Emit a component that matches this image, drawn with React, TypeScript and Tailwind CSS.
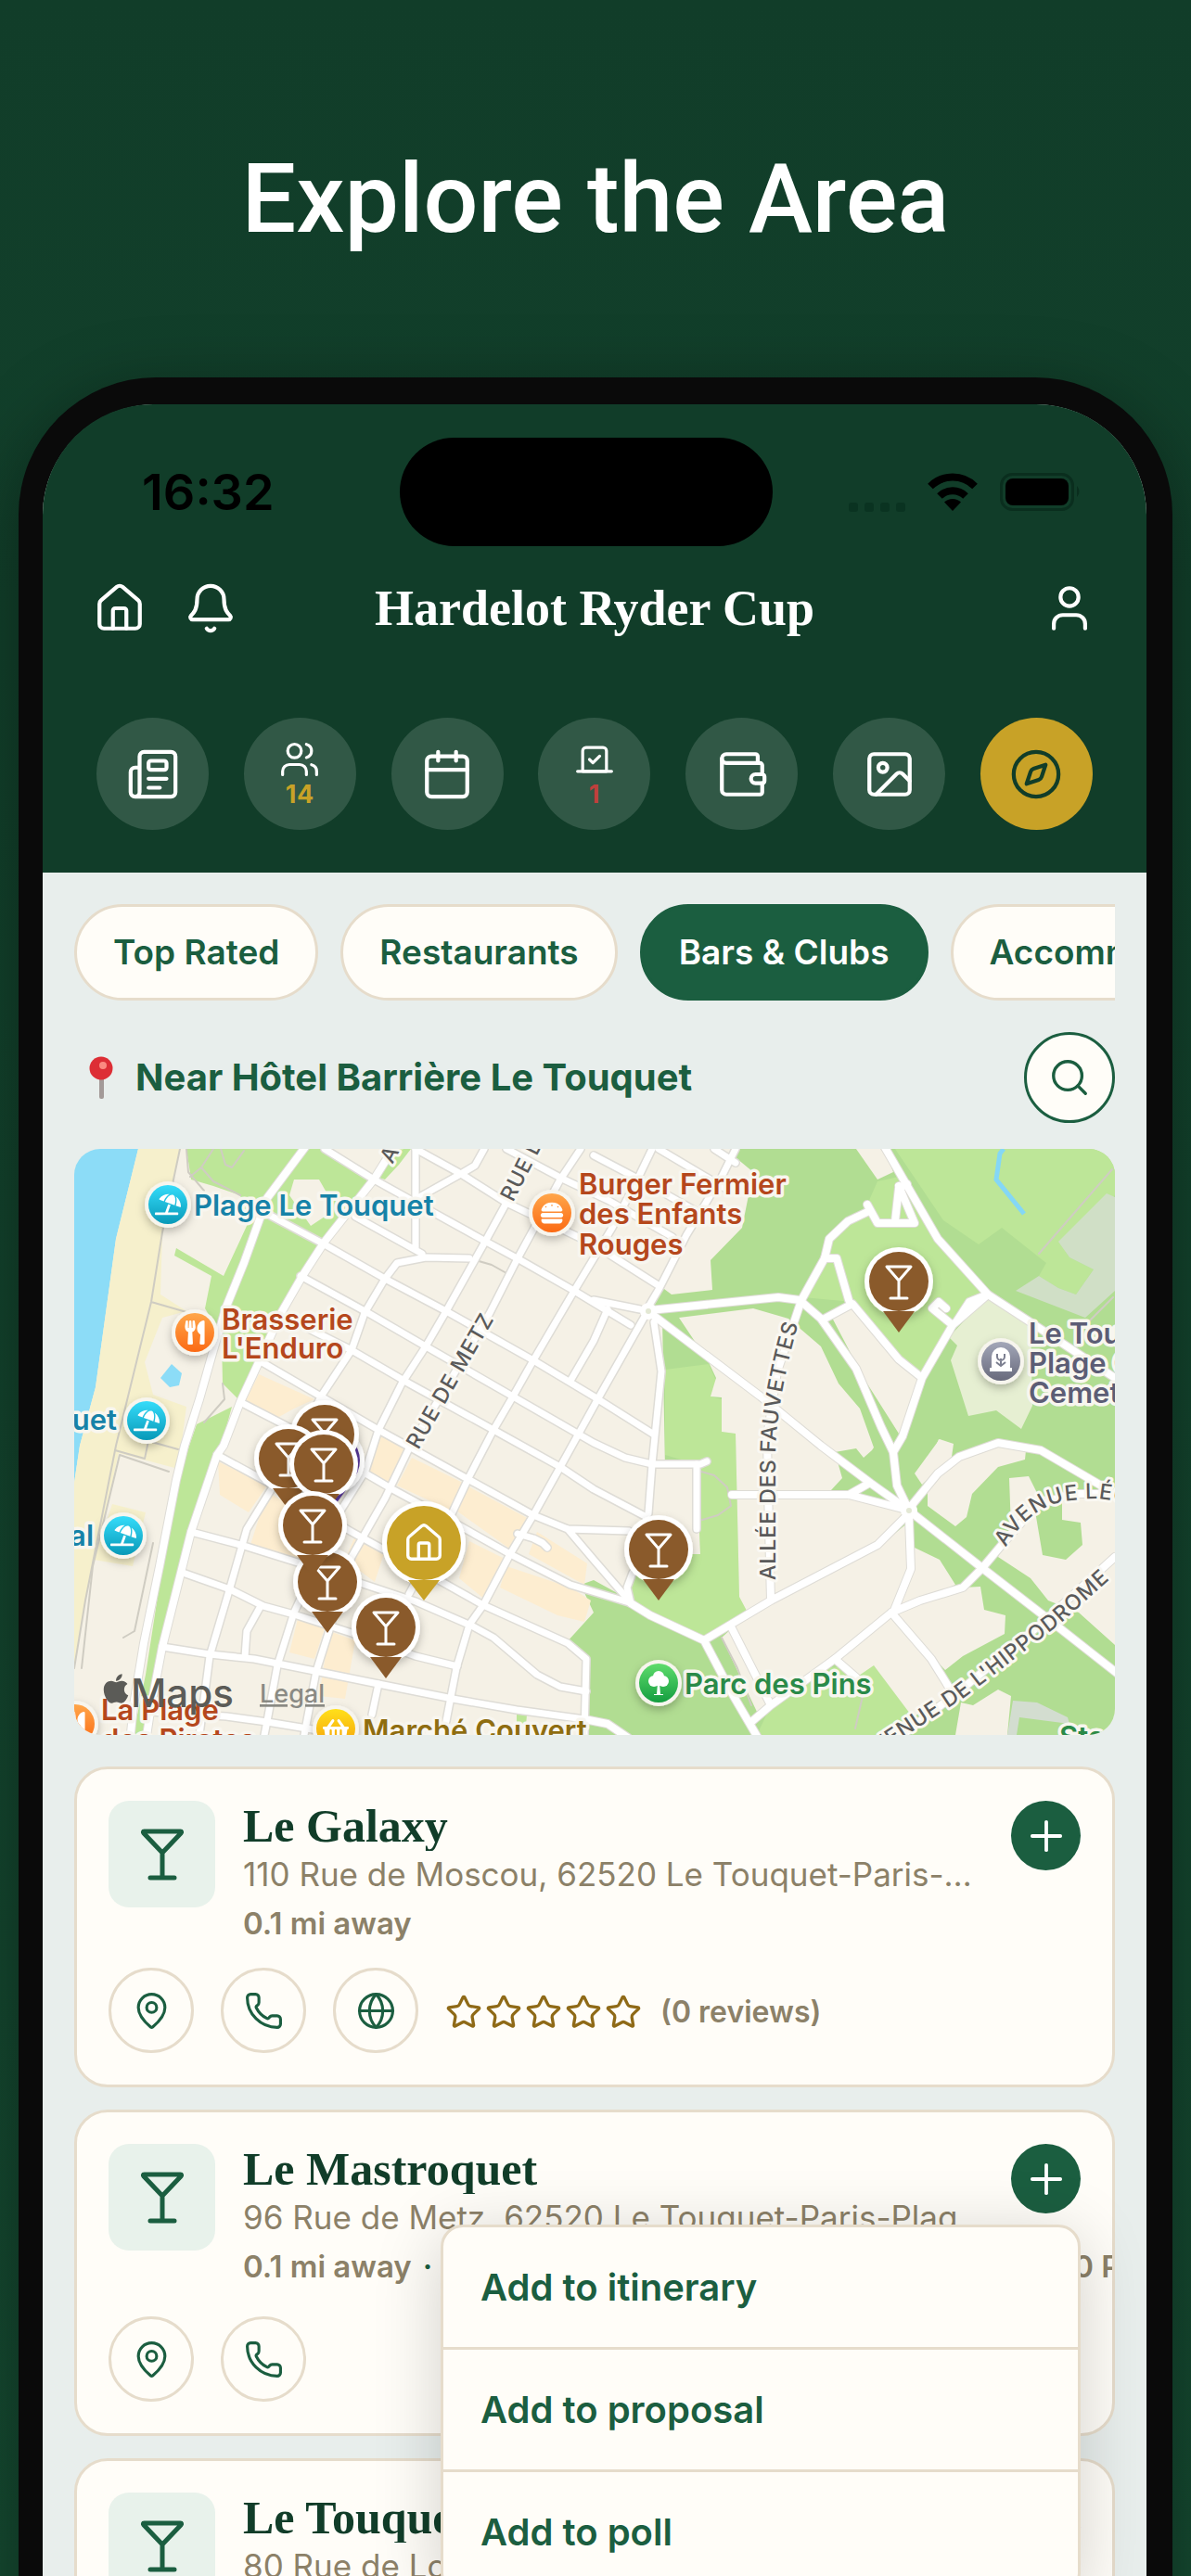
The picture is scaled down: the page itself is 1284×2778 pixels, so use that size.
import type { ReactNode } from 'react';
import {
  Bell,
  Calendar,
  Compass,
  Globe,
  House,
  Image as ImageIcon,
  MapPin,
  Newspaper,
  Phone,
  Plus,
  Search,
  Star,
  User,
  Users,
  Vote,
  Wallet
} from 'lucide-react';
import { FaApple, FaShoppingBasket, FaUmbrellaBeach, FaUtensils } from 'react-icons/fa';
import { FaBurger } from 'react-icons/fa6';

interface Venue {
  name: string;
  address: string;
  distance: string;
  hours?: string;
  website?: boolean;
  reviews?: number;
  menuOpen?: boolean;
}

const venues: Venue[] = [
  {
    name: 'Le Galaxy',
    address: '110 Rue de Moscou, 62520 Le Touquet-Paris-Plage, France',
    distance: '0.1 mi away',
    website: true,
    reviews: 0
  },
  {
    name: 'Le Mastroquet',
    address: '96 Rue de Metz, 62520 Le Touquet-Paris-Plage, France',
    distance: '0.1 mi away',
    hours: '10:00 PM',
    menuOpen: true
  },
  {
    name: 'Le Touquet Bar',
    address: '80 Rue de Londres, 62520 Le Touquet-Paris-Plage, France',
    distance: '0.1 mi away'
  }
];

const filters = ['Top Rated', 'Restaurants', 'Bars & Clubs', 'Accommodation'];
const menuItems = ['Add to itinerary', 'Add to proposal', 'Add to poll'];

function Martini({ className, strokeWidth = 5 }: { className?: string; strokeWidth?: number }) {
  return (
    <svg
      viewBox="0 0 48 56"
      className={className}
      fill="none"
      stroke="currentColor"
      strokeWidth={strokeWidth}
      strokeLinecap="round"
      strokeLinejoin="round"
    >
      <path d="M4.500 3h39q2 0 .5 2L24 26 4 5q-1.500-2 .5-2ZM24 26v27M11 53h26" />
    </svg>
  );
}

function StatusBar() {
  return (
    <div className="grid grid-cols-[385fr_402px_403fr] items-center pt-9">
      <div className="pl-[107px] text-[54px] leading-none font-semibold text-black">16:32</div>
      <div className="h-[117px] rounded-full bg-black" />
      <div className="flex items-center justify-end gap-6 pr-[70px]">
        <div className="flex gap-[7px] self-end">
          <span className="size-[10px] rounded-[3px] bg-[#0a3321]" />
          <span className="size-[10px] rounded-[3px] bg-[#0a3321]" />
          <span className="size-[10px] rounded-[3px] bg-[#0a3321]" />
          <span className="size-[10px] rounded-[3px] bg-[#0a3321]" />
        </div>
        <svg viewBox="0 0 54 41" className="h-[41px] w-[54px]" fill="none" stroke="#000" strokeWidth="8">
          <path d="M3 14.500a34 34 0 0 1 48 0" />
          <path d="M13 25a20 20 0 0 1 28 0" />
          <path d="M27 41l-9-9.500a13 13 0 0 1 18 0Z" fill="#000" stroke="none" />
        </svg>
        <svg viewBox="0 0 88 42" className="h-[42px] w-[88px]">
          <rect x="1.500" y="1.500" width="77" height="38" rx="12" fill="none" stroke="#0a2e1e" strokeWidth="3" />
          <rect x="6" y="6" width="68" height="29" rx="8" fill="#000" />
          <path d="M83 14q5 6 0 12Z" fill="#0a2e1e" />
        </svg>
      </div>
    </div>
  );
}

function NavItem({
  label,
  active,
  count,
  countClass,
  children
}: {
  label: string;
  active?: boolean;
  count?: number;
  countClass?: string;
  children: ReactNode;
}) {
  return (
    <button
      aria-label={label}
      className={
        'flex size-[121px] flex-col items-center justify-center rounded-full ' +
        (active ? 'bg-[#c8a227] text-[#113d29]' : 'bg-[#315846] text-white')
      }
    >
      {children}
      {count !== undefined && <span className={'text-[27px] leading-8 font-bold tracking-wide ' + countClass}>{count}</span>}
    </button>
  );
}

function Header() {
  return (
    <header className="bg-[#113d29] pb-[46px]">
      <StatusBar />
      <div className="grid h-[134px] grid-cols-[1fr_auto_1fr] items-center px-[54px] text-white">
        <div className="flex gap-10">
          <button aria-label="Home">
            <House size={58} strokeWidth={1.75} />
          </button>
          <button aria-label="Notifications">
            <Bell size={58} strokeWidth={1.75} />
          </button>
        </div>
        <h2 className="font-['Liberation_Serif',serif] text-[54px] leading-none font-bold">Hardelot Ryder Cup</h2>
        <button aria-label="Profile" className="justify-self-end">
          <User size={58} strokeWidth={1.75} />
        </button>
      </div>
      <nav className="mt-[51px] flex justify-between px-[58px]">
        <NavItem label="News">
          <Newspaper size={58} strokeWidth={1.75} />
        </NavItem>
        <NavItem label="Players" count={14} countClass="text-[#c8a227]">
          <Users size={44} strokeWidth={1.75} />
        </NavItem>
        <NavItem label="Calendar">
          <Calendar size={58} strokeWidth={1.75} />
        </NavItem>
        <NavItem label="Votes" count={1} countClass="text-[#c0403c]">
          <Vote size={44} strokeWidth={1.75} />
        </NavItem>
        <NavItem label="Wallet">
          <Wallet size={58} strokeWidth={1.75} />
        </NavItem>
        <NavItem label="Photos">
          <ImageIcon size={58} strokeWidth={1.75} />
        </NavItem>
        <NavItem label="Explore" active>
          <Compass size={58} strokeWidth={1.75} />
        </NavItem>
      </nav>
    </header>
  );
}

// Map geometry, in map units (1122 x 632)
const lightGreen = [
  '121,0 270,0 323,33 270,100 244,137 223,177 208,203 194,230 177,270 160,253 159,203 141,172 148,137 108,115 110,107 161,137 186,83 179,50 150,40 126,33',
  '335,33 350,17 363,0 350,0 325,30',
  '170,278 132,297 124,320 110,367 95,450 77,567 66,620 62,632 77,632 84,583 95,540 115,457 126,410 154,330 164,300',
  '866,35 855,60 809,110 786,160 839,165 889,227 914,247 947,190 985,157 931,97 889,30',
  '885,0 1122,0 1122,50 1070,110 1053,127 1000,85 975,103 937,77',
  '637,238 684,232 692,250 686,267 698,270 698,305 713,307 717,483 726,500 679,530 600,487 602,460 640,437 675,437 671,340 637,330',
  '751,600 805,560 862,557 904,613 893,632 736,632',
  '1061,100 1073,117 1099,130 1080,157 1061,150 1040,137',
  '477,610 488,610 487,622 477,622'
];

const darkGreen =
  '714,0 714,10 732,25 720,85 686,120 688,152 644,157 632,148 620,175 630,200 633,240 625,330 620,400 600,430 600,487 560,465 546,470 560,500 530,533 553,550 550,632 1122,632 1122,0';

const land = [
  '237,33 264,33 272,47 270,73 255,83 232,50',
  '623,180 634,182 637,345 671,345 675,437 640,437 602,460 600,430',
  '652,182 732,172 770,183 805,213 824,253 847,280 862,322 860,325 851,333 843,323 820,327 828,355 816,368 836,373 893,393 866,427 751,487 726,500 717,483 713,307 698,305 698,268 686,267 692,247 684,230',
  '816,180 837,168 889,227 914,247 889,307 851,247',
  '843,0 874,0 883,25 866,33',
  '751,490 866,430 899,403 901,453 881,500 805,560 751,600 709,517',
  '698,527 709,517 748,603 736,607',
  '906,430 933,443 950,470 912,487 883,500 902,453',
  '881,500 958,473 977,472 981,497 1004,503 1003,523 958,547 939,562',
  '820,550 881,500 947,587 904,613 862,557 843,570',
  '906,350 933,313 948,318 946,332 914,362',
  '920,367 946,340 996,318 1026,325 1025,335 996,343 968,372 962,397 950,407 920,385',
  '1008,355 1029,353 1040,375 1122,370 1122,535 1083,500 1050,487 1031,463 996,440 1010,410',
  '996,583 1010,590 1006,632 950,632 956,597 969,600',
  '932,313 940,318 925,330'
];

const blocks = [
  '199,243 259,270 237,280 219,290 184,273',
  '155,337 208,363 188,392 157,373',
  '208,370 235,385 245,445 190,427',
  '326,307 357,323 339,363 314,347',
  '364,333 419,360 406,390 348,363',
  '423,363 492,400 472,433 412,390',
  '426,423 466,443 444,487 415,463',
  '466,450 535,473 557,487 550,510 521,503 459,473',
  '303,417 335,433 324,467 292,443',
  '241,507 270,517 259,550 232,543',
  '275,520 303,530 292,593 264,590',
  '499,413 553,447 550,470 490,437'
];

const streets = [
  'M270 0L323 33 444 100 481 120 539 153 600 190',
  'M368 0L417 27 466 58 560 103 631 148',
  'M466 0L528 33 575 55 645 95',
  'M560 7L617 37 672 68M690 0L713 15M630 0L706 45',
  'M208 70L268 102 335 140 401 175 495 228 560 267 625 308',
  'M244 137L317 177 379 213 473 267 560 317 594 333 623 340 675 340 682 337',
  'M245 190L299 217 361 253 452 303 524 343 560 367 617 397',
  'M199 228L266 267 328 303 426 357 495 395 532 410 598 412M532 410L560 443 598 487',
  'M179 273L237 303 314 350 343 367 404 400 470 437 535 470 598 489',
  'M154 330L215 363 299 413 361 447 441 492 532 533 552 550 550 632',
  'M126 413L183 428 244 447 314 470 368 488 430 515 452 527 499 567 524 580 552 585',
  'M117 457L168 475 204 493 237 502 299 522 368 547 413 558',
  'M95 537L146 545 194 550 259 563 328 577 408 593 477 605 550 615',
  'M81 607L164 612 208 618 263 627',
  'M442 0L432 18 415 28 372 52',
  'M368 0V107M303 73L375 113',
  'M335 140L348 123 379 117 426 118',
  'M546 0L524 33 495 87 477 120 448 177 401 257 361 323 335 377 299 440 285 480 277 513 261 563 248 632',
  'M466 58L443 100 401 175 379 213 353 253 328 303 314 347 281 400 260 450 237 500 219 557 208 617 205 632',
  'M335 140L313 177 299 217 266 267 240 320 215 363 186 410 168 473 146 547 135 632',
  'M623 0L610 27 580 85 539 153 495 228 473 267 452 303 426 353 404 400 361 480',
  'M713 0L698 30 660 93 631 150 618 172',
  'M617 177L566 267 524 343 495 395 470 437 441 492 426 513 412 560 401 617',
  'M575 173L560 207 535 250M560 163L610 173M201 493L186 520 184 548M328 577L321 610',
  'M625 187L633 240 625 320 623 340 619 393M671 340V410M478 415L495 420 505 425 510 430',
  'M602 457L596 473 600 490'
];

const avenues = [
  'M255 -10L208 53 183 123 164 170 150 217 135 270 119 320 110 357 92 450 75 533 64 600 60 640',
  'M350 -10L323 33 270 100 246 137 223 177 199 230 179 273 161 320 154 330 126 413 115 457 95 537 83 600 77 640',
  'M600 490L621 503 679 530 709 587 740 640',
  'M679 530L751 487 866 427 900 393M751 487L748 367 747 310 758 240 776 187 784 163',
  'M709 517L751 600M730 618L751 600 820 550 881 500 912 487 958 473 979 452 1000 427 1037 385 1075 372 1122 372',
  'M881 500L924 550 947 587M820 550L843 570',
  'M900 390L979 452 1050 507 1130 570M900 397L902 453 883 500',
  'M621 177L740 267 805 320 858 360 900 390M709 373H835L893 388M835 373L858 360',
  'M900 390L887 363 883 327 870 300 843 237 805 183 782 163 759 160 621 174',
  'M883 327L893 310 914 247 947 190 985 157M914 247L889 227 839 167 809 183M835 163L822 118 809 118',
  'M784 163L809 118 814 97 834 78 855 68M855 60L866 80H906L889 40M885 78L889 42 898 38',
  'M872 -5L931 97 985 157 1031 187 1122 247M985 157L965 165 952 185M947 190L925 172 932 165 940 172',
  'M904 383L931 350 954 332 996 317 1042 325 1107 363',
  'M893 632L960 580 1045 510 1122 440M550 615L575 620 597 635'
];

const paths = [
  'M114 0L95 90 83 165 45 320 12 487 0 560M83 165L121 176M121 0L123 25 140 45M150 0L137 20 125 30M137 20L150 35 179 50M158 0L163 17 170 20 183 2',
  'M160 253L162 270 140 295M49 330L102 348M49 330L20 450 8 560M85 425L65 520 53 527M44 325L76 334 80 315 112 324',
  'M426 118L450 125 466 134M676 348L690 352 704 365 708 385 694 395 677 400M1119 22L1040 113M843 570L850 590 842 625',
  'M698 527L715 560 730 600M1120 160L1090 190'
];

const pins = [
  [270, 308],
  [231, 334],
  [269, 340],
  [273, 467],
  [257, 406],
  [336, 516],
  [630, 432],
  [889, 143]
];

function BarPin({ x, y, color = '#8a5a2b' }: { x: number; y: number; color?: string }) {
  return (
    <g transform={`translate(${x} ${y})`}>
      <circle r="37" fill="#fff" filter="url(#pin-shadow)" />
      <circle r="32" fill={color} />
      <path d="M-17 32H17L0 55Z" fill={color} />
      <path
        d="M-13-16H13L0-1ZM0-1V17M-9 18H9"
        fill="none"
        stroke="#fff"
        strokeWidth="3"
        strokeLinecap="round"
        strokeLinejoin="round"
      />
    </g>
  );
}

function Poi({ x, y, fill, children }: { x: number; y: number; fill: string; children: ReactNode }) {
  return (
    <g transform={`translate(${x} ${y})`} color="#fff">
      <circle r="25" fill="#f7f5ee" filter="url(#pin-shadow)" />
      <circle r="21" fill={fill} />
      {children}
    </g>
  );
}

function MapView() {
  return (
    <svg
      viewBox="0 0 1122 632"
      preserveAspectRatio="xMidYMid slice"
      className="mt-7 block w-full rounded-[28px] bg-[#f5f1e6]"
      role="img"
      aria-label="Map of bars near Hôtel Barrière Le Touquet"
    >
      <defs>
        <filter id="pin-shadow" x="-30%" y="-30%" width="160%" height="170%">
          <feDropShadow dx="0" dy="4" stdDeviation="5" floodOpacity="0.25" />
        </filter>
        <linearGradient id="poi-beach" x2="0" y2="1">
          <stop stopColor="#35dcfa" />
          <stop offset="1" stopColor="#0899b8" />
        </linearGradient>
        <linearGradient id="poi-food" x2="0" y2="1">
          <stop stopColor="#ffa64a" />
          <stop offset="1" stopColor="#fb6a14" />
        </linearGradient>
        <linearGradient id="poi-park" x2="0" y2="1">
          <stop stopColor="#5fdc6c" />
          <stop offset="1" stopColor="#149d40" />
        </linearGradient>
        <linearGradient id="poi-shop" x2="0" y2="1">
          <stop stopColor="#ffe01a" />
          <stop offset="1" stopColor="#f59e0b" />
        </linearGradient>
        <linearGradient id="poi-grave" x2="0" y2="1">
          <stop stopColor="#a3a7b8" />
          <stop offset="1" stopColor="#686a7c" />
        </linearGradient>
        <path id="allee" d="M756 465L756 330Q757 270 783 180" />
        <path id="leo" d="M1004 430C1022 400 1045 382 1075 379S1105 374 1170 392" />
        <path id="hippo" d="M866 653L962 590 1062 513 1160 425" />
      </defs>

      {/* Land cover */}
      <polygon points="0,0 69,0 45,97 23,257 6,320 0,360" fill="#8cdcf7" />
      <polygon
        points="69,0 114,0 95,90 93,157 121,175 95,182 76,230 85,265 121,278 112,345 48,328 12,487 0,560 0,360 6,320 23,257 45,97"
        fill="#f6f0cc"
      />
      <polygon points="41,383 77,392 63,450 21,443" fill="#f6f0cc" />
      <polygon points="105,232 116,242 113,255 103,257 93,247" fill="#8cdcf7" />
      <polygon points={darkGreen} fill="#b1dd92" />
      {lightGreen.map((points) => (
        <polygon key={points} points={points} fill="#bde698" />
      ))}
      {land.map((points) => (
        <polygon key={points} points={points} fill="#f5f1e6" />
      ))}
      <polygon points="1035,385 1065,380 1065,400 1085,403 1087,427 1069,443 1044,438" fill="#b1dd92" />
      <polygon
        points="1015,153 1040,137 1061,150 1080,157 1099,130 1073,117 1061,100 1113,48 1122,52 1122,153 1090,182"
        fill="#d0dfc6"
      />
      <polygon points="985,158 1031,187 1033,277 1021,302 994,282 964,288 945,228 952,212 943,203" fill="#e6efd2" />
      <polygon points="1012,595 1038,597 1071,613 1073,620 1019,613 1016,632 1006,632" fill="#d3ddd0" />
      <polyline points="1002,0 998,5 994,33 1024,70" fill="none" stroke="#84d7f6" strokeWidth="5" />
      {blocks.map((points) => (
        <polygon key={points} points={points} fill="#fdedd0" />
      ))}

      {/* Roads */}
      <g fill="none" strokeLinejoin="round" strokeLinecap="round">
        {paths.map((d) => (
          <path key={d} d={d} stroke="#cfccc2" strokeWidth="2" />
        ))}
        {[...streets, ...avenues].map((d) => (
          <path key={d} d={d} stroke="#dedcd6" strokeWidth="10" />
        ))}
        {streets.map((d) => (
          <path key={d} d={d} stroke="#fff" strokeWidth="7" />
        ))}
        {avenues.map((d) => (
          <path key={d} d={d} stroke="#fff" strokeWidth="8" />
        ))}
        <circle cx="619" cy="175" r="6" fill="#e3e8d4" stroke="#fff" strokeWidth="6" />
        <circle cx="900" cy="390" r="6" fill="#e3e8d4" stroke="#fff" strokeWidth="6" />
      </g>

      {/* Street names */}
      <g
        fontSize="23"
        fontWeight="500"
        letterSpacing="1"
        fill="#5a5a5a"
        stroke="#faf8f2"
        strokeWidth="6"
        strokeLinejoin="round"
        paintOrder="stroke"
      >
        <text transform="translate(371 325) rotate(-60)">RUE DE METZ</text>
        <text transform="translate(473 58) rotate(-63)">RUE DE PARIS</text>
        <text transform="translate(343 17) rotate(-62)">AVENUE</text>
        <text>
          <textPath href="#allee">ALLÉE DES FAUVETTES</textPath>
        </text>
        <text>
          <textPath href="#leo">AVENUE LÉON GARET</textPath>
        </text>
        <text>
          <textPath href="#hippo">VENUE DE L'HIPPODROME</textPath>
        </text>
      </g>

      {/* Places */}
      <g fontSize="31" fontWeight="600" stroke="#f8f6ef" strokeWidth="7" strokeLinejoin="round" paintOrder="stroke">
        <g fill="#1682a8">
          <text x="129" y="72">Plage Le Touquet</text>
          <text x="46" y="303" textAnchor="end">Touquet</text>
          <text x="21" y="428" textAnchor="end">Central</text>
        </g>
        <g fill="#b5471c">
          <text x="159" y="195">Brasserie</text>
          <text x="159" y="226">L'Enduro</text>
          <text x="544" y="49">Burger Fermier</text>
          <text x="544" y="81">des Enfants</text>
          <text x="544" y="114">Rouges</text>
          <text x="29" y="616">La Plage</text>
          <text x="29" y="648">des Pirates</text>
        </g>
        <g fill="#5c5d75">
          <text x="1029" y="210">Le Touquet</text>
          <text x="1029" y="242">Plage Communal</text>
          <text x="1029" y="274">Cemetery</text>
        </g>
        <text x="658" y="588" fill="#2a8a48">Parc des Pins</text>
        <text x="1062" y="645" fill="#2a8a48">Stade</text>
        <text x="311" y="638" fill="#8f6d10">Marché Couvert</text>
      </g>
      <Poi x={101} y={60} fill="url(#poi-beach)">
        <FaUmbrellaBeach x="-14" y="-14" size={28} />
      </Poi>
      <Poi x={78} y={293} fill="url(#poi-beach)">
        <FaUmbrellaBeach x="-14" y="-14" size={28} />
      </Poi>
      <Poi x={53} y={417} fill="url(#poi-beach)">
        <FaUmbrellaBeach x="-14" y="-14" size={28} />
      </Poi>
      <Poi x={130} y={198} fill="url(#poi-food)">
        <FaUtensils x="-13" y="-13" size={26} />
      </Poi>
      <Poi x={515} y={69} fill="url(#poi-food)">
        <FaBurger x="-13" y="-13" size={26} />
      </Poi>
      <Poi x={1} y={620} fill="url(#poi-food)">
        <FaUtensils x="-13" y="-13" size={26} />
      </Poi>
      <Poi x={630} y={576} fill="url(#poi-park)">
        <g fill="#fff">
          <circle cx="0" cy="-7" r="6" />
          <circle cx="-5" cy="-2" r="6" />
          <circle cx="5" cy="-2" r="6" />
          <path d="M-1 0H1L2 12H5V13H-5V12H-2Z" />
        </g>
      </Poi>
      <Poi x={282} y={625} fill="url(#poi-shop)">
        <FaShoppingBasket x="-14" y="-13" size={28} />
      </Poi>
      <Poi x={999} y={229} fill="url(#poi-grave)">
        <path d="M-10 7V-5a10 10 0 0 1 20 0V7h2v4h-24V7Z" fill="#fff" />
        <path d="M0 5V-3M-4-8v3a4 4 0 0 0 8 0v-3M-5 1L0 5 5 1" fill="none" stroke="#7c7f90" strokeWidth="2" />
      </Poi>

      {/* Pins */}
      <BarPin x={276} y={336} color="#5b3a9e" />
      {pins.map(([x, y]) => (
        <BarPin key={`${x}-${y}`} x={x} y={y} />
      ))}
      <g transform="translate(377 425)" color="#fff">
        <circle r="45" fill="#fff" filter="url(#pin-shadow)" />
        <circle r="40" fill="#c8a227" />
        <path d="M-17 40H17L0 62Z" fill="#c8a227" />
        <House x="-23" y="-23" size={46} strokeWidth={1.75} />
      </g>

      <FaApple x="27" y="564" size={36} color="#5b5b57" />
      <text x="61" y="602" fontSize="42" fontWeight="500" fill="#5b5b57">
        Maps
      </text>
      <a href="#legal">
        <text x="200" y="597" fontSize="27" fontWeight="500" fill="#8a8a84" textDecoration="underline">
          Legal
        </text>
      </a>
    </svg>
  );
}

function RoundAction({ label, children }: { label: string; children: ReactNode }) {
  return (
    <button
      aria-label={label}
      className="flex size-[92px] items-center justify-center rounded-full border-[3px] border-[#e6dccb] text-[#1b5e40]"
    >
      {children}
    </button>
  );
}

function VenueCard({ venue }: { venue: Venue }) {
  return (
    <li className="rounded-[36px] border-[3px] border-[#e6dccb] bg-[#fffdf8] p-[34px]">
      <div className="flex items-start">
        <div className="flex size-[115px] shrink-0 items-center justify-center rounded-[22px] bg-[#e8f2eb] text-[#1b5e40]">
          <Martini className="h-14 w-12" />
        </div>
        <div className="ml-[30px] min-w-0 flex-1">
          <h3 className="truncate font-['Liberation_Serif',serif] text-[50px] leading-[54px] font-bold text-[#113d29]">
            {venue.name}
          </h3>
          <p className="truncate text-[35px] leading-[50px] text-[#8c8168]">{venue.address}</p>
        </div>
        <div className={venue.menuOpen ? 'relative z-10 ml-[27px]' : 'ml-[27px]'}>
          <button
            aria-label={`Add ${venue.name}`}
            className="flex size-[75px] items-center justify-center rounded-full bg-[#1b5e40] text-white"
          >
            <Plus size={52} strokeWidth={1.75} />
          </button>
          {venue.menuOpen && (
            <div className="absolute top-full right-0 mt-3 w-[690px] divide-y-[3px] divide-[#e6dccb] rounded-3xl border-[3px] border-[#e6dccb] bg-[#fffdf8] shadow-[0_12px_72px_rgba(0,0,0,0.18)]">
              {menuItems.map((item) => (
                <button
                  key={item}
                  className="block h-[132px] w-full px-10 text-left text-[40px] font-semibold text-[#1b5e40] last:h-[129px]"
                >
                  {item}
                </button>
              ))}
            </div>
          )}
        </div>
      </div>
      <div
        className={
          '-mt-2 mr-[-34px] ml-[145px] flex overflow-hidden text-[33px] leading-[50px] font-semibold whitespace-nowrap text-[#8c8168] ' +
          (venue.hours ? 'h-14' : '')
        }
      >
        <span>{venue.distance}</span>
        {venue.hours && (
          <>
            <span className="ml-3 text-[#1b5e40]">·</span>
            <span className="-mr-10 ml-auto">{venue.hours}</span>
          </>
        )}
      </div>
      <div className="mt-[23px] flex items-center">
        <div className="flex gap-[29px]">
          <RoundAction label="Directions">
            <MapPin size={43} strokeWidth={1.75} />
          </RoundAction>
          <RoundAction label="Call">
            <Phone size={43} strokeWidth={1.75} />
          </RoundAction>
          {venue.website && (
            <RoundAction label="Website">
              <Globe size={43} strokeWidth={1.75} />
            </RoundAction>
          )}
        </div>
        {venue.reviews !== undefined && (
          <>
            <div className="ml-[29px] flex gap-[3px] pt-1 text-[#8f6a17]">
              {[1, 2, 3, 4, 5].map((n) => (
                <Star key={n} size={40} strokeWidth={2} />
              ))}
            </div>
            <span className="ml-5 pt-1 text-[32px] font-semibold text-[#8c8168]">({venue.reviews} reviews)</span>
          </>
        )}
      </div>
    </li>
  );
}

export default function App() {
  return (
    <div className="flex h-screen flex-col overflow-hidden bg-linear-to-b from-[#113d29] to-[#154a31] font-[Inter,sans-serif]">
      <h1 className="pt-[150px] text-center font-[Roboto,sans-serif] text-[104px] leading-[130px] font-medium text-white">
        Explore the Area
      </h1>

      {/* Phone */}
      <div className="mx-5 mt-[127px] shrink-0 rounded-t-[148px] border-t-[29px] border-r-[28px] border-l-[26px] border-[#0a0a0a] bg-[#e8eeec] shadow-[0_20px_80px_rgba(0,0,0,0.4)]">
        <div className="overflow-hidden rounded-t-[119px]">
          <Header />
        </div>
        <main className="px-[34px] pt-[34px]">
          <div className="flex gap-6 overflow-hidden">
            {filters.map((filter) => (
              <button
                key={filter}
                className={
                  'h-[104px] shrink-0 rounded-full border-[3px] px-[39px] text-[37px] font-semibold ' +
                  (filter === 'Bars & Clubs'
                    ? 'border-[#1b5e40] bg-[#1b5e40] text-white'
                    : 'border-[#e6dccb] bg-[#fffdf8] text-[#1b5e40]')
                }
              >
                {filter}
              </button>
            ))}
          </div>

          <div className="mt-[34px] flex items-center">
            <svg viewBox="0 0 26 46" className="ml-4 h-[46px] w-[26px]">
              <rect x="11" y="22" width="5" height="24" rx="2" fill="#a39a98" />
              <circle cx="13" cy="13" r="12.500" fill="#dd2e35" />
              <circle cx="15" cy="10" r="4" fill="#fb8a80" />
            </svg>
            <p className="ml-6 flex-1 text-[40px] font-bold text-[#1b5e40]">Near Hôtel Barrière Le Touquet</p>
            <button
              aria-label="Search"
              className="flex size-[98px] items-center justify-center rounded-full border-[3px] border-[#1b5e40] bg-[#fffdf8] text-[#1b5e40]"
            >
              <Search size={46} strokeWidth={1.75} />
            </button>
          </div>

          <MapView />

          <ul className="mt-[34px] flex flex-col gap-6 pb-10">
            {venues.map((venue) => (
              <VenueCard key={venue.name} venue={venue} />
            ))}
          </ul>
        </main>
      </div>
    </div>
  );
}
